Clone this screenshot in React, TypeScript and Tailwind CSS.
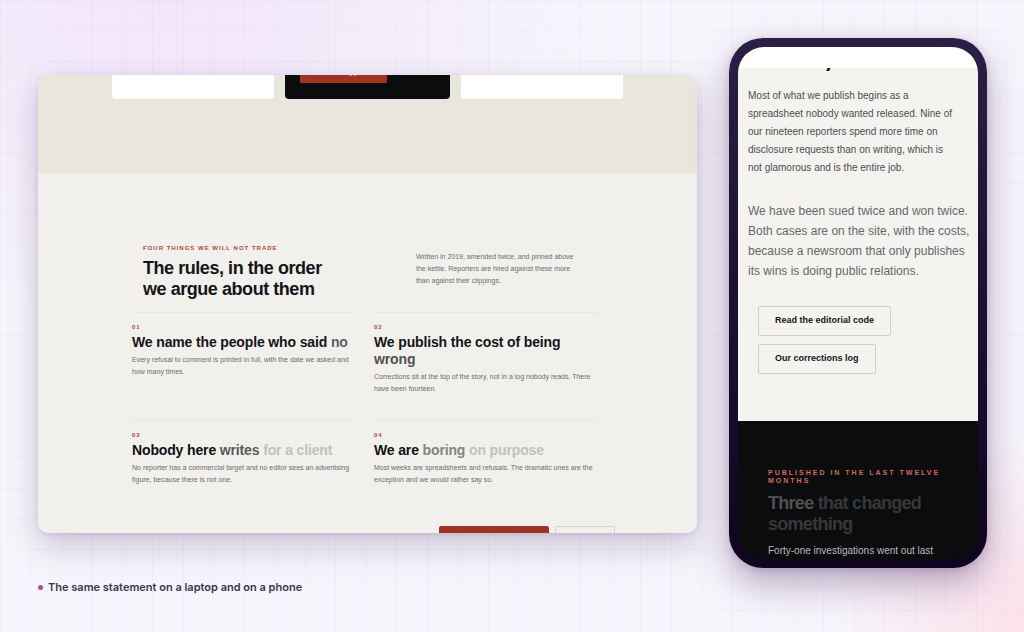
const rules = [
  {
    number: "01",
    title: [
      { text: "We name the people who said", color: "text-[#141518]" },
      { text: "no", color: "text-[#5d5e60]" },
    ],
    body: "Every refusal to comment is printed in full, with the date we asked and how many times.",
  },
  {
    number: "02",
    title: [
      { text: "We publish the cost of being", color: "text-[#141518]" },
      { text: "wrong", color: "text-[#505153]" },
    ],
    body: "Corrections sit at the top of the story, not in a log nobody reads. There have been fourteen.",
  },
  {
    number: "03",
    title: [
      { text: "Nobody here", color: "text-[#0f1012]" },
      { text: "writes", color: "text-[#58595b]" },
      { text: "for a client", color: "text-[#c2c1bf]" },
    ],
    body: "No reporter has a commercial target and no editor sees an advertising figure, because there is not one.",
  },
  {
    number: "04",
    title: [
      { text: "We are", color: "text-[#0f1012]" },
      { text: "boring", color: "text-[#848483]" },
      { text: "on purpose", color: "text-[#c2c1bf]" },
    ],
    body: "Most weeks are spreadsheets and refusals. The dramatic ones are the exception and we would rather say so.",
  },
];

function Laptop() {
  return (
    <section className="overflow-hidden rounded-[10px] bg-[#f1f0ec] shadow-[0_14px_34px_rgba(62,34,96,0.22),0_2px_6px_rgba(62,34,96,0.12)]">
      {/* Plans strip */}
      <div className="grid h-[98px] grid-cols-3 items-start gap-3 bg-[#e9e6de] px-[74px]">
        <div className="h-6 rounded-b-[4px] bg-white" />
        <div className="-mx-px h-6 rounded-b-[4px] bg-[#0a0c0d] pl-[15px]">
          <button className="flex h-2 w-[87px] items-end justify-end overflow-hidden rounded-b-[1px] bg-[#9f3422] pr-[29px] text-[7px] leading-[10px] font-bold text-white">
            <span className="-translate-y-[6px]">pp</span>
          </button>
        </div>
        <div className="h-6 rounded-b-[4px] bg-white" />
      </div>

      {/* Rules */}
      <div className="pr-[100px] pl-[94px] pt-[72px]">
        <div className="flex justify-between px-[11px]">
          <div>
            <p className="text-[6px] leading-[6px] font-bold tracking-[1px] text-[#b0473a] uppercase">
              Four things we will not trade
            </p>
            <h2 className="mt-[7px] text-[18px] leading-[21px] font-bold tracking-tight text-[#141518]">
              The rules, in the order
              <br />
              we argue about them
            </h2>
          </div>
          <p className="mt-[6px] mr-1 w-[166px] text-[7px] leading-[12px] text-[#6b6c6e]">
            Written in 2019, amended twice, and pinned above the kettle. Reporters are hired against these more than against their clippings.
          </p>
        </div>

        <div className="mt-3 grid grid-cols-2 gap-x-[19px]">
          {rules.map((rule) => (
            <article key={rule.number} className="h-[108px] border-t border-[#e8e7e3] pt-[11px]">
              <p className="text-[6px] leading-[6px] font-bold tracking-[1px] text-[#b0473a]">{rule.number}</p>
              <h3 className="mt-1 text-[14px] leading-[17px] font-bold tracking-[-0.01em]">
                {rule.title.map((part) => (
                  <span key={part.text} className={part.color}>
                    {part.text}{" "}
                  </span>
                ))}
              </h3>
              <p className="mt-[3px] text-[7px] leading-[12px] text-[#6b6c6e]">{rule.body}</p>
            </article>
          ))}
        </div>
      </div>

      {/* Action buttons peeking in */}
      <div className="-mt-[2px] flex h-[7px] justify-end gap-[6px] overflow-hidden pr-[82px]">
        <button aria-label="Accept" className="h-5 w-[110px] rounded-[2px] bg-[#9f3422]" />
        <button aria-label="Decline" className="h-5 w-[60px] rounded-[2px] border border-[#d2d1cd]" />
      </div>
    </section>
  );
}

function Phone() {
  return (
    <section className="w-[258px] shrink-0 rounded-[34px] bg-linear-to-b from-[#2b1f47] to-[#0f051e] p-[9px] shadow-[0_16px_36px_rgba(62,24,86,0.34),0_2px_8px_rgba(62,34,96,0.16)]">
      <div className="overflow-hidden rounded-[26px] bg-[#0a0c0d]">
        <div className="h-[21px] bg-white" />
        <div className="bg-[#f4f3f0] pr-1 pb-[47px] pl-[10px]">
          <h2 className="flex h-[3px] items-end overflow-hidden pl-[75px] text-[20px] leading-5 font-bold text-[#0a0c0d]">
            <span className="translate-y-px">y</span>
          </h2>
          <p className="mt-4 text-[10px] leading-[18px] text-[#4c4d50]">
            Most of what we publish begins as a
            <br />
            spreadsheet nobody wanted released. Nine of
            <br />
            our nineteen reporters spend more time on
            <br />
            disclosure requests than on writing, which is
            <br />
            not glamorous and is the entire job.
          </p>
          <p className="mt-6 text-[12px] leading-5 text-[#66676a]">
            We have been sued twice and won twice. Both cases are on the site, with the costs, because a newsroom that only publishes its wins is doing public relations.
          </p>
          <div className="mt-[25px] flex flex-col items-start gap-2 pl-[10px] text-[9px] font-bold text-[#141518]">
            <button className="h-[30px] rounded-[2px] border border-[#d0cfcc] px-4">Read the editorial code</button>
            <button className="h-[30px] rounded-[2px] border border-[#d0cfcc] px-4">Our corrections log</button>
          </div>
        </div>

        <div className="h-[138px] px-[30px] pt-12">
          <p className="text-[7px] leading-[8px] font-bold tracking-[2px] text-[#d2695f] uppercase">
            Published in the last twelve months
          </p>
          <h2 className="mt-2 text-[18px] leading-[21px] font-bold tracking-[-0.04em] text-[#37383a]">
            <span className="text-[#505153]">Three</span> that changed something
          </h2>
          <p className="mt-[7px] text-[10px] leading-[18px] text-[#b9babb]">
            Forty-one investigations went out last
          </p>
        </div>
      </div>
    </section>
  );
}

export default function App() {
  return (
    <div className="min-h-screen bg-[#f6f5fb] bg-[radial-gradient(ellipse_at_16%_0%,#f1e5fa_0%,transparent_36%),radial-gradient(circle_at_100%_98%,#fce1ea_0%,transparent_16%)] font-['Liberation_Sans',Arial,sans-serif]">
      <div className="min-h-screen bg-[linear-gradient(90deg,#6450a009_1px,transparent_1px,transparent_30px,#6450a009_30px,#6450a009_31px,transparent_31px),linear-gradient(#6450a009_1px,transparent_1px,transparent_30px,#6450a009_30px,#6450a009_31px,transparent_31px)] bg-size-[61px_61px]">
        <main className="flex items-start gap-8 pt-[38px] pr-[37px] pl-[38px]">
          <div className="min-w-0 flex-1 pt-[37px]">
            <Laptop />
            <p className="mt-[46px] flex items-center gap-[5px] font-[Inter,sans-serif] text-[11px] leading-4 font-semibold text-[#3c3450]">
              <span className="size-[5px] rounded-full bg-[#b3489c]" />
              The same statement on a laptop and on a phone
            </p>
          </div>
          <Phone />
        </main>
      </div>
    </div>
  );
}
